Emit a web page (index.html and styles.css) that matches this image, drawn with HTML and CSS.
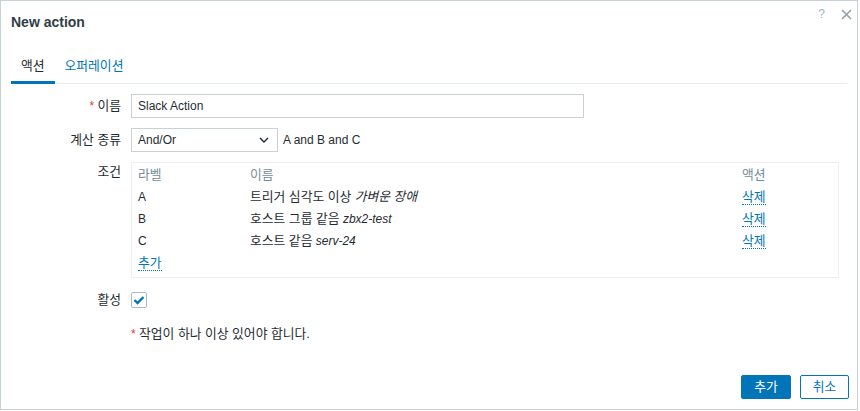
FILE: index.html
```html
<!DOCTYPE html>
<html lang="ko">
<head>
<meta charset="utf-8">
<title>New action</title>
<link rel="stylesheet" href="styles.css">
</head>
<body>
<div class="dialog">
  <div class="dlg-head">
    <h4 class="dlg-title">New action</h4>
    <div class="dlg-tools">
      <span class="help">?</span>
      <svg class="close" width="11" height="11" viewBox="0 0 11 11"><path d="M1 1L10 10M10 1L1 10" stroke="#8fa0aa" stroke-width="1.6" fill="none"/></svg>
    </div>
  </div>
  <div class="dlg-body">
    <ul class="tabs">
      <li class="tab active"><span class="ko">액션</span></li>
      <li class="tab"><span class="ko">오퍼레이션</span></li>
    </ul>
    <div class="form">
      <label class="lbl"><span class="req">*</span> <span class="ko">이름</span></label>
      <div class="field"><input class="text-input" type="text" value="Slack Action"></div>

      <label class="lbl"><span class="ko">계산 종류</span></label>
      <div class="field row">
        <div class="select"><span>And/Or</span>
          <svg width="10" height="6" viewBox="0 0 10 6"><path d="M1 1L5 5L9 1" stroke="#1f2c33" stroke-width="1.4" fill="none"/></svg>
        </div>
        <span class="expr">A and B and C</span>
      </div>

      <label class="lbl lbl-top"><span class="ko">조건</span></label>
      <div class="field">
        <div class="cond-box">
          <table class="cond">
            <thead>
              <tr><th class="c1"><span class="ko">라벨</span></th><th class="c2"><span class="ko">이름</span></th><th class="c3"><span class="ko">액션</span></th></tr>
            </thead>
            <tbody>
              <tr><td>A</td><td><span class="ko">트리거 심각도 이상</span> <i class="ko">가벼운 장애</i></td><td><a class="link ko">삭제</a></td></tr>
              <tr><td>B</td><td><span class="ko">호스트 그룹 같음</span> <i>zbx2-test</i></td><td><a class="link ko">삭제</a></td></tr>
              <tr><td>C</td><td><span class="ko">호스트 같음</span> <i>serv-24</i></td><td><a class="link ko">삭제</a></td></tr>
              <tr><td colspan="3"><a class="link ko">추가</a></td></tr>
            </tbody>
          </table>
        </div>
      </div>

      <label class="lbl"><span class="ko">활성</span></label>
      <div class="field">
        <span class="checkbox"><svg width="12" height="10" viewBox="0 0 12 10"><path d="M1.5 5L4.5 8L10.5 2" stroke="#0275b8" stroke-width="2.4" fill="none"/></svg></span>
      </div>

      <div></div>
      <div class="field"><span class="note"><span class="req">*</span> <span class="ko">작업이 하나 이상 있어야 합니다.</span></span></div>
    </div>
  </div>
  <div class="dlg-foot">
    <button class="btn primary"><span class="ko">추가</span></button>
    <button class="btn alt"><span class="ko">취소</span></button>
  </div>
</div>
</body>
</html>
```
FILE: styles.css
```css
* { box-sizing: border-box; }
html, body { margin: 0; padding: 0; background: #fff; }
body {
  font-family: "Liberation Sans", Arial, "Noto Sans CJK KR", sans-serif;
  font-size: 12px;
  color: #1f2c33;
}
.ko { font-size: 12.8px; line-height: 14px; }
.dialog {
  width: 858px;
  height: 410px;
  border: 1px solid #c8d1d6;
  background: #fff;
  display: flex;
  flex-direction: column;
}
.dlg-head {
  height: 42px;
  display: flex;
  align-items: flex-start;
  justify-content: space-between;
  padding: 13px 10px 0 10px;
}
.dlg-title {
  margin: 0;
  font-size: 14px;
  font-weight: bold;
  line-height: 16px;
  color: #2f3e47;
}
.dlg-tools {
  display: flex;
  align-items: center;
  gap: 16px;
  margin-top: -7px;
  margin-right: -5px;
}
.help {
  color: #a6b3ba;
  font-size: 12px;
  line-height: 14px;
}
.dlg-body { flex: 1; padding: 0 10px; }
.tabs {
  list-style: none;
  margin: 0;
  padding: 0;
  display: flex;
  border-bottom: 1px solid #ebeef0;
  margin-top: 11px;
}
.tab {
  padding: 5px 10px 8px;
  line-height: 14px;
  color: #0275b8;
  border-bottom: 3px solid transparent;
  margin-bottom: -1px;
}
.tab.active { color: #1f2c33; border-bottom-color: #0275b8; }
.form {
  display: grid;
  grid-template-columns: 110px 1fr;
  column-gap: 10px;
  row-gap: 10px;
  padding-top: 10px;
}
.lbl {
  text-align: right;
  line-height: 24px;
}
.lbl-top { line-height: 20px; }
.req { color: #e33734; }
.field { min-height: 24px; display: flex; align-items: center; }
.row { gap: 5px; }
.text-input {
  width: 453px;
  height: 24px;
  border: 1px solid #c8d1d6;
  padding: 0 6px;
  font: inherit;
  color: #1f2c33;
  outline: none;
}
.select {
  width: 147px;
  height: 24px;
  border: 1px solid #c8d1d6;
  padding: 0 8px 0 6px;
  display: flex;
  align-items: center;
  justify-content: space-between;
}
.cond-box {
  width: 708px;
  border: 1px solid #ebeef0;
  padding: 1px 6px 3px;
}
.cond { border-collapse: collapse; width: 100%; }
.cond th, .cond td {
  text-align: left;
  height: 22px;
  padding: 0;
  font-weight: normal;
  white-space: nowrap;
}
.cond th { color: #768d99; }
.c1 { width: 112px; }
.c3 { width: 90px; }
.link {
  color: #0275b8;
  border-bottom: 1px dotted #0275b8;
  cursor: pointer;
}
.checkbox {
  width: 16px;
  height: 16px;
  border: 1px solid #acbbc2;
  display: inline-flex;
  align-items: center;
  justify-content: center;
  border-radius: 2px;
}
.note { line-height: 24px; }
.dlg-foot {
  display: flex;
  justify-content: flex-end;
  gap: 9px;
  padding: 0 8px 10px 0;
}
.btn {
  height: 24px;
  padding: 0;
  font: inherit;
  border-radius: 2px;
  cursor: pointer;
  white-space: nowrap;
}
.primary { background: #0275b8; color: #fff; border: 1px solid #0275b8; width: 50px; }
.alt { background: #fff; color: #0275b8; border: 1px solid #0275b8; width: 49px; }
```
